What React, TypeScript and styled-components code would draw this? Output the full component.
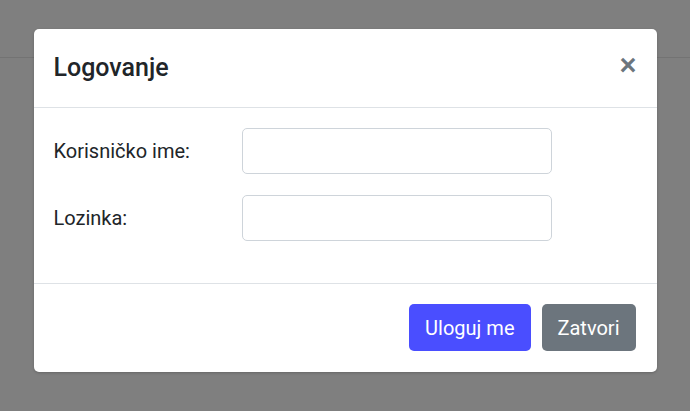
import React from 'react'
import styled, { createGlobalStyle } from 'styled-components'

const Global = createGlobalStyle`
  html, body { margin: 0; padding: 0; }
  body {
    font-family: Roboto, "Liberation Sans", sans-serif;
    background: #ffffff;
  }
`

const App = () => {
  return (
    <>
      <Global />
      <Page>
        <TopBar />
        <Backdrop>
          <Modal>
            <Header>
              <Title>Logovanje</Title>
              <Close aria-label="close">×</Close>
            </Header>
            <Body>
              <Row>
                <Label>Korisničko ime:</Label>
                <Input type="text" />
              </Row>
              <Row>
                <Label>Lozinka:</Label>
                <Input type="password" />
              </Row>
            </Body>
            <Footer>
              <Button $variant="primary">Uloguj me</Button>
              <Button $variant="secondary">Zatvori</Button>
            </Footer>
          </Modal>
        </Backdrop>
      </Page>
    </>
  )
}

export default App

const Page = styled.div`
  width: 100%;
  height: 411px;
  position: relative;
  background: #ffffff;
  overflow: hidden;
`

const TopBar = styled.div`
  height: 57px;
  border-bottom: 1px solid #e6e6e6;
  background: #ffffff;
`

const Backdrop = styled.div`
  position: absolute;
  inset: 0;
  background: rgba(0, 0, 0, 0.5);
  display: flex;
  justify-content: center;
  align-items: flex-start;
`

const Modal = styled.div`
  margin-top: 29px;
  width: 623px;
  background: #ffffff;
  border-radius: 5px;
  box-shadow: 0 1px 3px rgba(0, 0, 0, 0.2);
`

const Header = styled.div`
  display: flex;
  align-items: center;
  justify-content: space-between;
  height: 78px;
  padding: 0 20px;
  border-bottom: 1px solid #dee2e6;
`

const Title = styled.h5`
  margin: 0;
  font-size: 25px;
  font-weight: 500;
  color: #212529;
  line-height: 1.2;
`

const Close = styled.button`
  border: none;
  background: none;
  padding: 0;
  margin-top: -6px;
  font-family: "Liberation Sans", Arial, sans-serif;
  font-size: 29px;
  font-weight: 700;
  line-height: 1;
  color: #6c757d;
  cursor: pointer;
`

const Body = styled.div`
  padding: 20px 20px 0;
  border-bottom: 1px solid #dee2e6;
`

const Row = styled.div`
  display: grid;
  grid-template-columns: 188px 310px;
  align-items: center;
  margin-bottom: 21px;

  &:last-child {
    margin-bottom: 42px;
  }
`

const Label = styled.label`
  font-size: 20px;
  color: #212529;
`

const Input = styled.input`
  box-sizing: border-box;
  height: 46px;
  width: 310px;
  border: 1px solid #ced4da;
  border-radius: 5px;
  background: #ffffff;
  font-size: 20px;
  padding: 6px 12px;
`

const Footer = styled.div`
  display: flex;
  justify-content: flex-end;
  gap: 11px;
  padding: 20px 21px 21px;
`

const Button = styled.button<{ $variant: 'primary' | 'secondary' }>`
  height: 47px;
  padding: 0 16px;
  border: none;
  border-radius: 5px;
  font-family: Roboto, "Liberation Sans", sans-serif;
  font-size: 20px;
  color: #ffffff;
  background: ${p => (p.$variant === 'primary' ? '#4a4eff' : '#6c757d')};
  cursor: pointer;
`
